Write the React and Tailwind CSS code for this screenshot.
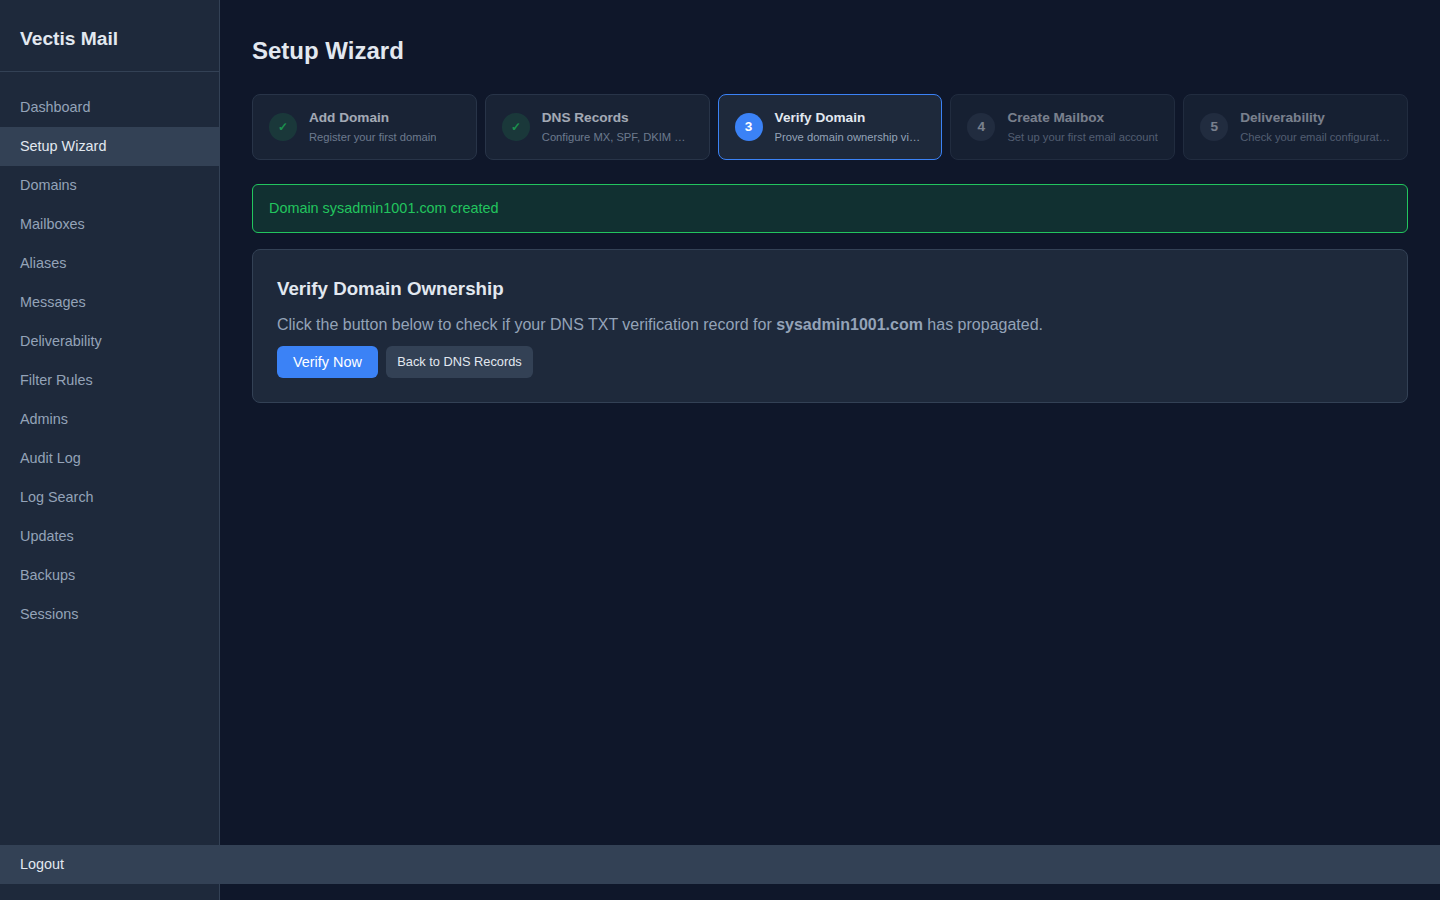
const navItems = ['Dashboard', 'Setup Wizard', 'Domains', 'Mailboxes', 'Aliases', 'Messages', 'Deliverability', 'Filter Rules', 'Admins', 'Audit Log', 'Log Search', 'Updates', 'Backups', 'Sessions']

const steps = [
  { mark: '✓', title: 'Add Domain', sub: 'Register your first domain', state: 'done' },
  { mark: '✓', title: 'DNS Records', sub: 'Configure MX, SPF, DKIM & DMARC', state: 'done' },
  { mark: '3', title: 'Verify Domain', sub: 'Prove domain ownership via DNS', state: 'active' },
  { mark: '4', title: 'Create Mailbox', sub: 'Set up your first email account', state: 'pending' },
  { mark: '5', title: 'Deliverability', sub: 'Check your email configuration', state: 'pending' },
]

function Step({ mark, title, sub, state }) {
  return (
    <div className={`flex-1 min-w-0 h-[66px] flex items-center gap-3 px-4 rounded-lg border bg-[#1e293b] ${state === 'active' ? 'border-[#3b82f6]' : 'border-[#334155]'} ${state === 'done' ? 'opacity-70' : ''} ${state === 'pending' ? 'opacity-50' : ''}`}>
      <div className={`w-7 h-7 shrink-0 rounded-full flex items-center justify-center font-bold ${state === 'active' ? 'bg-[#3b82f6] text-white text-[13.6px]' : ''} ${state === 'done' ? 'bg-[#22c55e]/20 text-[#22c55e] text-xs' : ''} ${state === 'pending' ? 'bg-[#334155] text-[#e2e8f0] text-[13.6px]' : ''}`}>
        {mark}
      </div>
      <div className="min-w-0 pb-[2px]">
        <div className="text-[13.6px] leading-[19px] font-semibold text-[#e2e8f0]">{title}</div>
        <div className="mt-[3px] text-[11.2px] leading-[15px] text-[#94a3b8] truncate">{sub}</div>
      </div>
    </div>
  )
}

export default function App() {
  return (
    <div className="relative flex min-h-[900px] bg-[#0f172a] text-[#e2e8f0] font-['Liberation_Sans',sans-serif]">
      {/* Sidebar */}
      <aside className="w-[220px] shrink-0 bg-[#1e293b] border-r border-[#334155]">
        <div className="h-[72px] px-5 pt-2 flex items-center border-b border-[#334155]">
          <span className="text-[19.2px] font-bold text-[#e2e8f0]">Vectis Mail</span>
        </div>
        <nav className="pt-4">
          {navItems.map(item => (
            <a key={item} href="#" className={`block px-5 py-[10px] text-[14.4px] leading-[19px] ${item === 'Setup Wizard' ? 'bg-[#334155] text-[#e2e8f0]' : 'text-[#94a3b8]'}`}>
              {item}
            </a>
          ))}
        </nav>
      </aside>

      {/* Main */}
      <main className="flex-1 min-w-0 p-8">
        <h1 className="text-2xl leading-[38px] font-bold text-[#e2e8f0] mb-6">Setup Wizard</h1>

        <div className="flex gap-2 mb-6">
          {steps.map(s => <Step key={s.title} {...s} />)}
        </div>

        <div className="mb-4 px-4 py-[14px] rounded-md border border-[#22c55e] bg-[#22c55e]/15 text-[14.4px] leading-[19px] text-[#22c55e]">
          Domain sysadmin1001.com created
        </div>

        <div className="p-6 rounded-lg border border-[#334155] bg-[#1e293b]">
          <h2 className="text-[18.72px] leading-[30px] font-bold text-[#e2e8f0] mb-2">Verify Domain Ownership</h2>
          <p className="text-base leading-[26px] text-[#94a3b8] mb-2">
            Click the button below to check if your DNS TXT verification record for <strong>sysadmin1001.com</strong> has propagated.
          </p>
          <div className="flex items-center gap-2">
            <button className="h-8 px-4 pt-px rounded-md bg-[#3b82f6] text-white text-[14.4px]">Verify Now</button>
            <button className="h-8 px-[11.5px] rounded-md bg-[#334155] text-[#e2e8f0] text-[12.8px]">Back to DNS Records</button>
          </div>
        </div>
      </main>

      {/* Logout spills across the page in the original */}
      <a href="#" className="absolute left-0 bottom-4 w-full px-5 py-[10px] bg-[#334155] text-[#e2e8f0] text-[14.4px] leading-[19px]">Logout</a>
    </div>
  )
}
